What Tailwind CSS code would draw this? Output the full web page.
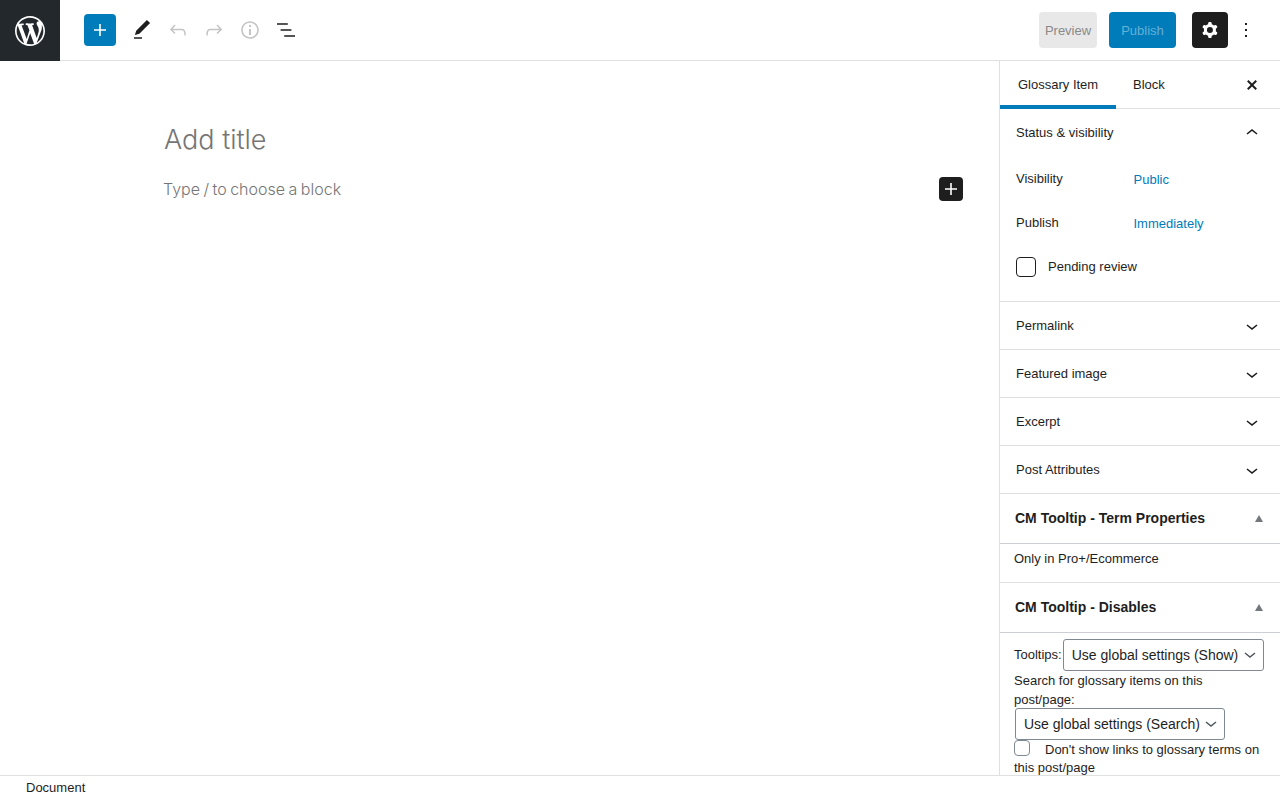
<!DOCTYPE html>
<html lang="en">
<head>
<meta charset="utf-8">
<title>Add title</title>
<script src="https://cdn.jsdelivr.net/npm/@tailwindcss/browser@4"></script>
</head>
<body class="m-0 bg-white font-['Liberation_Sans',Arial,sans-serif] text-[13px] text-[#1e1e1e]">
<div class="flex h-[800px] w-[1280px] flex-col overflow-hidden">
  <header class="flex h-[61px] shrink-0 items-center border-b border-[#e0e0e0]">
    <div class="flex h-[61px] w-[60px] shrink-0 items-center justify-center bg-[#23282d] -mb-px">
      <svg class="h-[36px] w-[36px] fill-white" viewBox="-2 -2 24 24"><path d="M20 10c0-5.51-4.49-10-10-10C4.48 0 0 4.49 0 10c0 5.52 4.48 10 10 10 5.51 0 10-4.48 10-10zM7.78 15.37L4.37 6.22c.55-.02 1.17-.08 1.17-.08.5-.06.44-1.13-.06-1.11 0 0-1.45.11-2.37.11-.18 0-.37 0-.58-.01C4.12 2.69 6.87 1.11 10 1.11c2.33 0 4.45.87 6.05 2.34-.68-.11-1.65.39-1.65 1.58 0 .74.45 1.36.9 2.1.35.61.55 1.36.55 2.46 0 1.49-1.4 5-1.4 5l-3.03-8.37c.54-.02.82-.17.82-.17.5-.05.44-1.25-.06-1.22 0 0-1.44.12-2.38.12-.87 0-2.33-.12-2.33-.12-.5-.03-.56 1.2-.06 1.22l.92.08 1.26 3.41zM17.41 10c.24-.64.74-1.87.43-4.25.7 1.29 1.05 2.71 1.05 4.25 0 3.29-1.73 6.24-4.4 7.78.97-2.59 1.94-5.2 2.92-7.78zM6.1 18.09C3.12 16.65 1.11 13.53 1.11 10c0-1.3.23-2.48.72-3.59C3.25 10.3 4.67 14.2 6.1 18.09zm4.03-6.63l2.58 6.98c-.86.29-1.76.45-2.71.45-.79 0-1.57-.11-2.29-.33.81-2.38 1.62-4.74 2.42-7.1z"/></svg>
    </div>
    <div class="ml-6 flex items-center">
      <button class="flex h-8 w-8 items-center justify-center rounded-sm bg-[#007cba]">
        <svg class="h-6 w-6 fill-white" viewBox="0 0 24 24"><path d="M18 11.2h-5.2V6h-1.6v5.2H6v1.6h5.2V18h1.6v-5.2H18z"/></svg>
      </button>
      <div class="ml-[14px] flex items-center gap-3">
        <svg class="h-6 w-6 fill-[#1e1e1e]" viewBox="0 0 24 24"><path d="M20.1 5.1L16.9 2 6.2 12.7l-1.3 4.4 4.5-1.3L20.1 5.1zM4 20.8h8v-1.5H4v1.5z"/></svg>
        <svg class="h-6 w-6 fill-[#c4c4c4]" viewBox="0 0 24 24"><path d="M18.3 11.7c-.6-.6-1.4-.9-2.3-.9H6.7l2.9-3.3-1.1-1-4.5 5L8.5 16l1-1-2.7-2.7H16c.5 0 .9.2 1.3.5 1 1 1 3.4 1 4.5v.3h1.5v-.2c0-1.5 0-4.3-1.5-5.7z"/></svg>
        <svg class="h-6 w-6 fill-[#c4c4c4]" viewBox="0 0 24 24"><path d="M15.6 6.5l-1.1 1 2.9 3.3H8c-.9 0-1.7.3-2.3.9-1.4 1.5-1.4 4.2-1.4 5.6v.2h1.5v-.3c0-1.1 0-3.5 1-4.5.3-.3.7-.5 1.3-.5h9.2L14.5 15l1.1 1.1 4.6-4.6-4.6-5z"/></svg>
        <svg class="h-6 w-6 fill-[#c4c4c4]" viewBox="0 0 24 24"><path d="M12 3.2c-4.8 0-8.8 3.9-8.8 8.8 0 4.8 3.9 8.8 8.8 8.8 4.8 0 8.8-3.9 8.8-8.8 0-4.8-4-8.8-8.8-8.8zm0 16c-4 0-7.2-3.3-7.2-7.2C4.8 8 8 4.8 12 4.8s7.2 3.3 7.2 7.2c0 4-3.2 7.2-7.2 7.2zM11 17h2v-6h-2v6zm0-8h2V7h-2v2z"/></svg>
        <svg class="h-6 w-6 fill-[#1e1e1e]" viewBox="0 0 24 24"><path d="M13.8 5.2H3v1.5h10.8V5.2zm-3.6 12v1.5H21v-1.5H10.2zm7.2-6H6.6v1.5h10.8v-1.5z"/></svg>
      </div>
    </div>
    <div class="ml-auto flex items-center">
      <button class="flex h-9 w-[58px] items-center justify-center rounded-sm bg-[#e8e8e8] pt-[2px] text-[13px] text-[#8a8a8a]">Preview</button>
      <button class="ml-3 flex h-9 w-[67px] items-center justify-center rounded-sm bg-[#007cba] pt-[2px] text-[13px] text-[#66b0d6]">Publish</button>
      <button class="ml-4 flex h-9 w-9 items-center justify-center rounded-sm bg-[#1e1e1e]">
        <svg class="h-6 w-6 fill-white" viewBox="0 0 24 24"><path fill-rule="evenodd" clip-rule="evenodd" d="M10.289 4.836A1 1 0 0111.275 4h1.306a1 1 0 01.987.836l.244 1.466c.787.26 1.503.679 2.108 1.218l1.393-.522a1 1 0 011.216.437l.653 1.13a1 1 0 01-.23 1.273l-1.148.944a6.025 6.025 0 010 2.435l1.149.946a1 1 0 01.23 1.272l-.653 1.13a1 1 0 01-1.216.437l-1.394-.522c-.605.54-1.32.958-2.108 1.218l-.244 1.466a1 1 0 01-.987.836h-1.306a1 1 0 01-.986-.836l-.244-1.466a5.995 5.995 0 01-2.108-1.218l-1.394.522a1 1 0 01-1.217-.436l-.653-1.131a1 1 0 01.23-1.272l1.149-.946a6.026 6.026 0 010-2.435l-1.148-.944a1 1 0 01-.23-1.272l.653-1.131a1 1 0 011.217-.437l1.393.522a5.995 5.995 0 012.108-1.218l.244-1.466zM14.929 12a3 3 0 11-6 0 3 3 0 016 0z"/></svg>
      </button>
      <svg class="mr-[22px] ml-[6px] h-6 w-6 fill-[#1e1e1e]" viewBox="0 0 24 24"><path d="M13 19h-2v-2h2v2zm0-6h-2v-2h2v2zm0-6h-2V5h2v2z"/></svg>
    </div>
  </header>

  <div class="flex min-h-0 flex-1">
    <main class="relative min-w-0 flex-1 pl-[164px] pr-[36px]">
      <h1 class="mt-[61px] font-['Inter',sans-serif] text-[27px] leading-[36px] font-light text-[#757575]">Add title</h1>
      <div class="mt-[19px] flex items-center justify-between">
        <p class="-ml-px font-['Inter',sans-serif] text-[16px] leading-[24px] font-light text-[#757575] [word-spacing:-1px]">Type / to choose a block</p>
        <button class="flex h-6 w-6 items-center justify-center rounded-sm bg-[#1e1e1e]">
          <svg class="h-6 w-6 fill-white" viewBox="0 0 24 24"><path d="M18 11.2h-5.2V6h-1.6v5.2H6v1.6h5.2V18h1.6v-5.2H18z"/></svg>
        </button>
      </div>
    </main>

    <aside class="w-[281px] shrink-0 overflow-hidden border-l border-[#e0e0e0]">
      <div class="relative flex h-[48px] border-b border-[#e0e0e0]">
        <div class="h-[48px] w-[116px] border-b-[4px] border-[#007cba] pt-[16px] pl-[18px] leading-[16px]">Glossary Item</div>
        <div class="pt-[16px] pl-[17px] leading-[16px]">Block</div>
        <svg class="absolute top-[14px] right-[18px] h-5 w-5 fill-[#1e1e1e]" viewBox="0 0 20 20"><path d="M14.95 6.46L11.41 10l3.54 3.54-1.41 1.41L10 11.42l-3.53 3.53-1.42-1.42L8.58 10 5.05 6.47l1.42-1.42L10 8.58l3.54-3.53z"/></svg>
      </div>

      <section class="h-[193px] border-b border-[#e0e0e0]">
        <div class="flex h-[47px] items-center justify-between pr-4 pl-4">
          <span>Status &amp; visibility</span>
          <svg class="h-6 w-6 fill-[#1e1e1e]" viewBox="0 0 24 24"><path d="M6.5 12.4L12 8l5.5 4.4-.9 1.2L12 10l-4.5 3.6-1-1.2z"/></svg>
        </div>
        <div class="pl-4">
          <div class="mt-[8px] flex h-[30px] items-center">
            <span class="w-[117.5px]">Visibility</span><span class="mt-[2px] text-[#007cba]">Public</span>
          </div>
          <div class="mt-[14px] flex h-[30px] items-center">
            <span class="w-[117.5px]">Publish</span><span class="mt-[2px] text-[#007cba]">Immediately</span>
          </div>
          <div class="mt-[19px] flex items-center">
            <span class="h-5 w-5 rounded-sm border border-[#1e1e1e]"></span><span class="ml-3">Pending review</span>
          </div>
        </div>
      </section>

      <section class="flex h-[48px] items-center justify-between border-b border-[#e0e0e0] px-4">
        <span>Permalink</span>
        <svg class="mt-px h-6 w-6 fill-[#1e1e1e]" viewBox="0 0 24 24"><path d="M17.5 11.6L12 16l-5.5-4.4.9-1.2L12 14l4.5-3.6 1 1.2z"/></svg>
      </section>
      <section class="flex h-[48px] items-center justify-between border-b border-[#e0e0e0] px-4">
        <span>Featured image</span>
        <svg class="mt-px h-6 w-6 fill-[#1e1e1e]" viewBox="0 0 24 24"><path d="M17.5 11.6L12 16l-5.5-4.4.9-1.2L12 14l4.5-3.6 1 1.2z"/></svg>
      </section>
      <section class="flex h-[48px] items-center justify-between border-b border-[#e0e0e0] px-4">
        <span>Excerpt</span>
        <svg class="mt-px h-6 w-6 fill-[#1e1e1e]" viewBox="0 0 24 24"><path d="M17.5 11.6L12 16l-5.5-4.4.9-1.2L12 14l4.5-3.6 1 1.2z"/></svg>
      </section>
      <section class="flex h-[48px] items-center justify-between border-b border-[#e0e0e0] px-4">
        <span>Post Attributes</span>
        <svg class="mt-px h-6 w-6 fill-[#1e1e1e]" viewBox="0 0 24 24"><path d="M17.5 11.6L12 16l-5.5-4.4.9-1.2L12 14l4.5-3.6 1 1.2z"/></svg>
      </section>

      <section class="border-b border-[#e0e0e0]">
        <div class="flex h-[50px] items-center justify-between border-b border-[#ccd0d4] pr-[17px] pl-[15px]">
          <span class="text-[14px] font-bold">CM Tooltip - Term Properties</span>
          <span class="h-0 w-0 border-x-[4px] border-b-[7px] border-x-transparent border-b-[#72777c]"></span>
        </div>
        <div class="h-[38px] pt-[6px] pl-[14px] leading-[18px]">Only in Pro+/Ecommerce</div>
      </section>

      <section>
        <div class="flex h-[50px] items-center justify-between border-b border-[#ccd0d4] pr-[17px] pl-[15px]">
          <span class="text-[14px] font-bold">CM Tooltip - Disables</span>
          <span class="h-0 w-0 border-x-[4px] border-b-[7px] border-x-transparent border-b-[#72777c]"></span>
        </div>
        <div class="px-[14px] pt-[6px]">
          <div class="flex items-center">
            <span>Tooltips:</span>
            <span class="ml-px flex h-8 w-[201px] items-center justify-between rounded-[3px] border border-[#7e8993] pr-[5px] pl-2 text-[14px]">Use global settings (Show)<svg class="h-4 w-4" viewBox="0 0 16 16" fill="none" stroke="#50575e" stroke-width="1.5"><path d="M3 6l5 4 5-4"/></svg></span>
          </div>
          <p class="-mb-px leading-[19px]">Search for glossary items on this post/page:</p>
          <span class="ml-px flex h-8 w-[210px] items-center justify-between rounded-[3px] border border-[#7e8993] pr-[5px] pl-2 text-[14px]">Use global settings (Search)<svg class="h-4 w-4" viewBox="0 0 16 16" fill="none" stroke="#50575e" stroke-width="1.5"><path d="M3 6l5 4 5-4"/></svg></span>
          <p class="pt-px leading-[18px]"><span class="mr-[15px] -mt-px inline-block h-4 w-4 rounded-[4px] border border-[#7e8993] align-top"></span>Don't show links to glossary terms on this post/page</p>
        </div>
      </section>
    </aside>
  </div>

  <footer class="relative h-[25px] shrink-0 border-t border-[#e0e0e0] bg-white pt-[3px] pl-[26px] leading-[18px]">Document</footer>
</div>
</body>
</html>
